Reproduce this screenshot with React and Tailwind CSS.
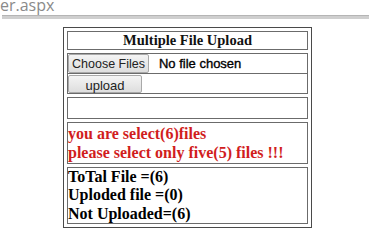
import React from 'react';

const serif = { fontFamily: '"Liberation Serif", "Times New Roman", serif' };
const sans = { fontFamily: '"Liberation Sans", Arial, sans-serif' };

const Cell = ({ className = '', children }) => (
  <div className={`border border-[#6b6b6b] ${className}`}>{children}</div>
);

const App = () => {
  const total = 6;
  const uploaded = 0;

  return (
    <div className="w-[369px] h-[239px] bg-white overflow-hidden">
      {/* address bar leftover */}
      <div className="h-[15px] overflow-hidden">
        <div className="text-[16px] leading-[16px] text-[#8a8a8a] -mt-[3px]" style={{ fontFamily: '"Open Sans", "Noto Sans", sans-serif' }}>
          er.aspx
        </div>
      </div>
      <div className="ml-[2px] h-[4px] bg-[#cfcfcf] border-t border-[#b5b5b5]" />

      <div className="ml-[63px] mt-[8px] w-[249px] border border-[#4a4a4a] p-[3px] flex flex-col gap-[3px]" style={serif}>
        <Cell className="h-[19px] flex items-center justify-center">
          <span className="text-[14.5px] font-bold text-[#111]">Multiple File Upload</span>
        </Cell>

        <Cell className="flex flex-col">
          <div className="h-[19px] flex items-center gap-[10px]" style={sans}>
            <button className="h-[19px] px-[3px] text-[12.5px] text-[#222] bg-gradient-to-b from-[#f4f4f4] to-[#dedede] border border-[#a9a9a9] rounded-[2px]">
              Choose Files
            </button>
            <span className="text-[13px] text-black [-webkit-text-stroke:0.35px_black]">No file chosen</span>
          </div>
          <div className="h-[20px] border-t border-[#6b6b6b] flex items-center" style={sans}>
            <button className="w-[74px] h-[18px] text-[13px] text-[#222] bg-gradient-to-b from-[#f4f4f4] to-[#dedede] border border-[#a9a9a9] rounded-[2px]">
              upload
            </button>
          </div>
        </Cell>

        <Cell className="h-[22px]" />

        <Cell className="h-[42px] flex flex-col justify-center">
          <p className="text-[16px] leading-[19px] font-bold text-[#d11d1d]">you are select({total})files</p>
          <p className="text-[16px] leading-[19px] font-bold text-[#d11d1d]">please select only five(5) files !!!</p>
        </Cell>

        <Cell className="h-[57px] flex flex-col justify-center text-[16px] leading-[18.5px] font-bold text-black">
          <p>ToTal File =({total})</p>
          <p>Uploded file =({uploaded})</p>
          <p>Not Uploaded=({total - uploaded})</p>
        </Cell>
      </div>
    </div>
  );
};

export default App;
